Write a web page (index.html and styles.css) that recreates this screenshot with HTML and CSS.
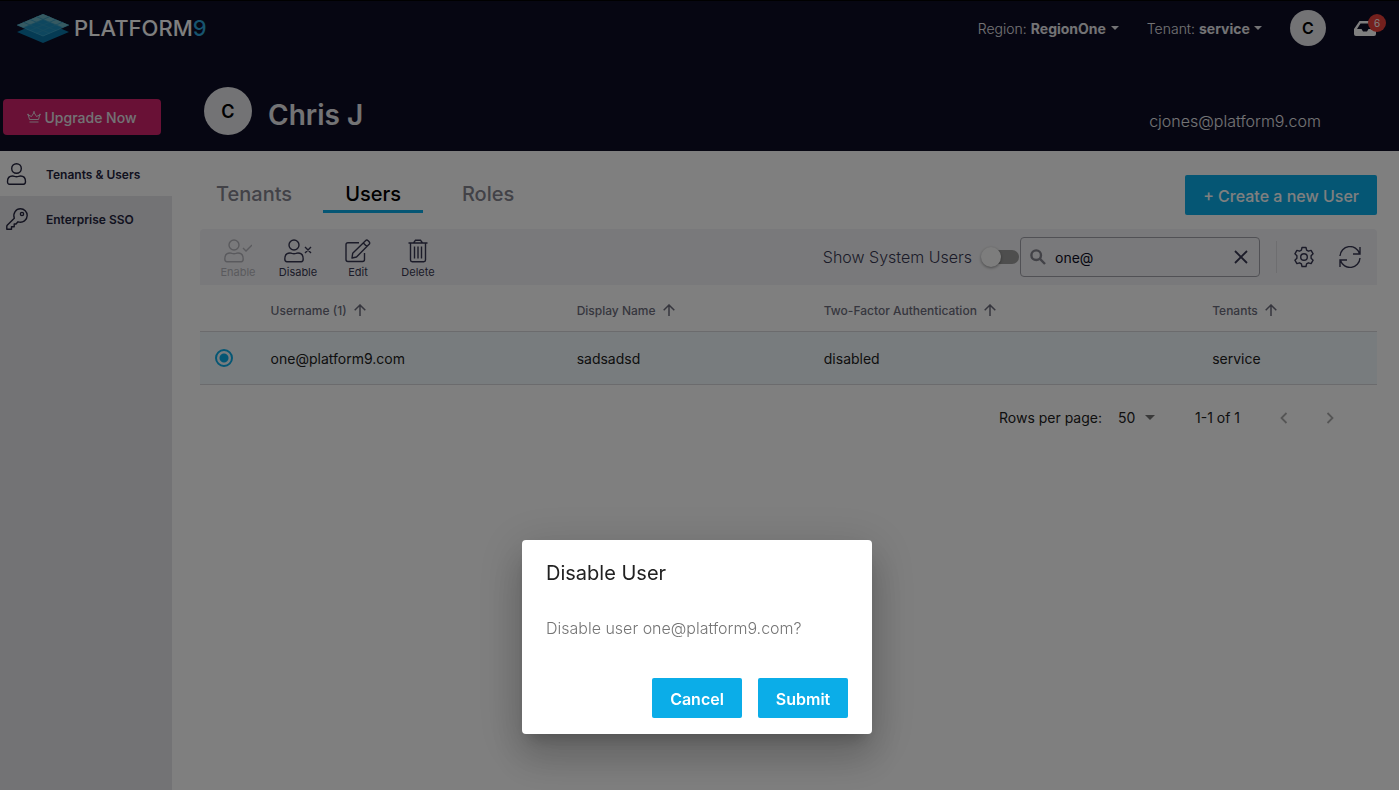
FILE: index.html
```html
<!DOCTYPE html>
<html lang="en">
<head>
    <meta charset="UTF-8">
    <meta name="viewport" content="width=device-width, initial-scale=1.0">
    <title>Platform9 - Tenants &amp; Users</title>
    <link rel="stylesheet" href="styles.css">
</head>
<body>
    <header class="header">
        <div class="topbar">
            <a class="logo" href="#">
                <svg width="52" height="29" viewBox="0 0 52 29">
                    <path d="M0 18 26 7 52 18 26 29z" fill="#0b76a8"/>
                    <path d="M0 11 26 0 52 11 26 22z" fill="#1c8fbf"/>
                    <path d="M26 0 52 11 45.500 13.700 26 5.500 6.500 13.700 0 11z" fill="#6db4c4"/>
                    <path d="M19.500 2.700 45.500 13.700M13 5.500 39 16.500M6.500 8.200 32.500 19.200M32.500 2.700 6.500 13.700M39 5.500 13 16.500M45.500 8.200 19.500 19.200" fill="none" stroke="#2f95bd" stroke-width=".8"/>
                    <path d="M0 11 26 22 52 11" fill="none" stroke="#4fb0d0" stroke-width=".6"/>
                </svg>
                <span class="logo-text">PLATFORM<span class="logo-nine">9</span></span>
            </a>
            <div class="topbar-right">
                <label class="context">Region:
                    <select class="context-select"><option>RegionOne</option></select>
                    <svg class="caret" width="8" height="4" viewBox="0 0 8 4"><path d="M0 0h8L4 4z" fill="currentColor"/></svg>
                </label>
                <label class="context">Tenant:
                    <select class="context-select"><option>service</option></select>
                    <svg class="caret" width="8" height="4" viewBox="0 0 8 4"><path d="M0 0h8L4 4z" fill="currentColor"/></svg>
                </label>
                <button class="avatar avatar-small" type="button">C</button>
                <button class="inbox" type="button" aria-label="Notifications">
                    <svg width="22" height="15" viewBox="0 0 22 15"><path d="M5.500 0h11L22 8v5q0 2-2 2H2q-2 0-2-2V8zM6.500 2.500 3 8h4.500L9 10.500h4L14.500 8H19l-3.500-5.500z" fill="#fff" fill-rule="evenodd"/></svg>
                    <span class="badge">6</span>
                </button>
            </div>
        </div>
        <div class="profile">
            <div class="upgrade-wrap">
                <button class="upgrade" type="button">
                    <svg width="14" height="12" viewBox="0 0 14 12" fill="none" stroke="currentColor" stroke-width=".9" stroke-linejoin="round"><path d="M2.500 8.500 1.300 4 4.500 5.500 7 1.500l2.500 4L12.700 4l-1.200 4.500zM2.500 11h9"/><circle cx="7" cy="1" r=".5"/><circle cx="1" cy="3.500" r=".5"/><circle cx="13" cy="3.500" r=".5"/></svg>
                    Upgrade Now
                </button>
            </div>
            <div class="avatar avatar-large">C</div>
            <h1 class="profile-name">Chris J</h1>
            <span class="profile-email">cjones@platform9.com</span>
        </div>
    </header>

    <div class="layout">
        <nav class="sidebar">
            <a class="nav-item active" href="#">
                <svg width="22" height="22" viewBox="0 0 22 22" fill="none" stroke="currentColor" stroke-width="1.400"><circle cx="10.500" cy="5.500" r="4.800"/><path d="M1.500 18.500C1.500 15 3.500 13 6.500 13q1 0 2 .4 2 .6 4 0 1-.4 2-.4c3 0 5 2 5 5.500 0 2-.8 2.700-2 2.700H3.500c-1.200 0-2-.7-2-2.700z"/></svg>
                <span class="nav-text">Tenants &amp; Users</span>
            </a>
            <a class="nav-item" href="#">
                <svg width="22" height="22" viewBox="0 0 22 22" fill="none" stroke="currentColor" stroke-width="1.400" stroke-linejoin="round"><path d="M8.300 10.200 1.200 17.300Q.8 17.700.8 18.300V21.200H5.500V18.700H8.200V16H10l2-2.200c5 1.600 9.200-2 9.200-6.300A6.700 6.700 0 0 0 14.500.800C10 .8 6.600 5 8.300 10.200z"/><circle cx="16" cy="6" r="1.600"/></svg>
                <span class="nav-text">Enterprise SSO</span>
            </a>
        </nav>

        <main class="content">
            <div class="tabs-row">
                <div class="tabs">
                    <a class="tab" href="#">Tenants</a>
                    <a class="tab selected" href="#">Users</a>
                    <a class="tab" href="#">Roles</a>
                </div>
                <button class="btn btn-create" type="button">+ Create a new User</button>
            </div>

            <div class="toolbar">
                <div class="actions">
                    <button class="action" type="button" disabled>
                        <svg width="28" height="24" viewBox="0 0 28 24" fill="none" stroke="currentColor" stroke-width="1.400"><circle cx="10" cy="6" r="5"/><path d="M.8 20C.8 16 3 14 6 14q1 0 2 .4 2 .6 4 0 1-.4 2-.4c3 0 5.200 2 5.200 6 0 2-.8 2.700-2 2.700H3c-1.400 0-2.200-.7-2.200-2.700zM19 9l3 3 6-6"/></svg>
                        Enable
                    </button>
                    <button class="action" type="button">
                        <svg width="28" height="24" viewBox="0 0 28 24" fill="none" stroke="currentColor" stroke-width="1.400"><circle cx="10" cy="6" r="5"/><path d="M.8 20C.8 16 3 14 6 14q1 0 2 .4 2 .6 4 0 1-.4 2-.4c3 0 5.200 2 5.200 6 0 2-.8 2.700-2 2.700H3c-1.400 0-2.200-.7-2.200-2.700zM21 8l6 6M27 8l-6 6"/></svg>
                        Disable
                    </button>
                    <button class="action" type="button">
                        <svg width="26" height="24" viewBox="0 0 26 24" fill="none" stroke="currentColor" stroke-width="1.400" stroke-linejoin="round"><path d="M14 3.800H3Q1 3.800 1 5.800V20.500Q1 22.500 3 22.500H17.500Q19.500 22.500 19.500 20.500V14M7 19l.7-4.700L20.500 1.700q1.300-1.200 2.600 0l1 1q1.200 1.300 0 2.600L11.500 18zM18.300 4l3.500 3.600"/></svg>
                        Edit
                    </button>
                    <button class="action" type="button">
                        <svg width="20" height="24" viewBox="0 0 20 24" fill="none" stroke="currentColor" stroke-width="1.400"><path d="M.5 4h19M2.500 4v17q0 1.700 1.700 1.700h11.600q1.700 0 1.700-1.700V4M5.500 4 7.500 1.200h5l2 2.800M6.500 7.500v12M10 7.500v12M13.500 7.500v12"/></svg>
                        Delete
                    </button>
                </div>
                <div class="filters">
                    <label class="system-label" for="systemUsers">Show System Users</label>
                    <input class="switch" type="checkbox" id="systemUsers">
                    <div class="search">
                        <svg width="16" height="16" viewBox="0 0 16 16" fill="none" stroke="currentColor" stroke-width="2.400"><circle cx="6.200" cy="6.200" r="4.800"/><path d="m9.700 9.700 5.300 5.300"/></svg>
                        <input class="search-input" type="text" aria-label="Search" value="one@">
                        <button class="icon-btn" type="button" aria-label="Clear search">
                            <svg width="14" height="14" viewBox="0 0 14 14" fill="none" stroke="currentColor" stroke-width="1.800"><path d="m1 1 12 12M13 1 1 13"/></svg>
                        </button>
                    </div>
                    <div class="table-tools">
                        <button class="icon-btn" type="button" aria-label="Settings">
                            <svg width="22" height="22" viewBox="0 0 22 22" fill="none" stroke="currentColor" stroke-width="1.400" stroke-linejoin="round"><path d="M9 1.500h4l.6 2.700 1.800 1 2.700-.8 2 3.400-2 1.900v2.600l2 1.900-2 3.400-2.700-.8-1.800 1-.6 2.700H9l-.6-2.700-1.800-1-2.700.8-2-3.400 2-1.900V9.700l-2-1.900 2-3.400 2.700.8 1.800-1z"/><circle cx="11" cy="11" r="3.300"/></svg>
                        </button>
                        <button class="icon-btn" type="button" aria-label="Refresh">
                            <svg width="22" height="22" viewBox="0 0 22 22" fill="none" stroke="currentColor" stroke-width="1.400"><path d="M1 10A10 10 0 0 1 20.500 7.500M21 1v7h-7M21 12A10 10 0 0 1 1.500 14.500M1 21v-7h7"/></svg>
                        </button>
                    </div>
                </div>
            </div>

            <table class="users">
                <colgroup>
                    <col class="col-select"><col class="col-username"><col class="col-display"><col class="col-auth"><col class="col-tenants">
                </colgroup>
                <thead>
                    <tr>
                        <th></th>
                        <th>Username (1) <svg class="sort" width="12" height="12" viewBox="0 0 12 12"><path d="M6 12V1M.7 6.300 6 1l5.300 5.300"/></svg></th>
                        <th>Display Name <svg class="sort" width="12" height="12" viewBox="0 0 12 12"><path d="M6 12V1M.7 6.300 6 1l5.300 5.300"/></svg></th>
                        <th>Two-Factor Authentication <svg class="sort" width="12" height="12" viewBox="0 0 12 12"><path d="M6 12V1M.7 6.300 6 1l5.300 5.300"/></svg></th>
                        <th>Tenants <svg class="sort" width="12" height="12" viewBox="0 0 12 12"><path d="M6 12V1M.7 6.300 6 1l5.300 5.300"/></svg></th>
                    </tr>
                </thead>
                <tbody>
                    <tr>
                        <td class="select-cell"><input class="radio" type="radio" name="user" aria-label="Select one@platform9.com" checked></td>
                        <td>one@platform9.com</td>
                        <td>sadsadsd</td>
                        <td>disabled</td>
                        <td>service</td>
                    </tr>
                </tbody>
            </table>

            <div class="pagination">
                <label for="rows">Rows per page:</label>
                <div class="rows">
                    <select class="rows-select" id="rows"><option>50</option></select>
                    <svg class="caret" width="10" height="5" viewBox="0 0 10 5"><path d="M0 0h10L5 5z" fill="#757575"/></svg>
                </div>
                <span class="range">1-1 of 1</span>
                <button class="icon-btn page-btn" type="button" aria-label="Previous page" disabled>
                    <svg width="8" height="12" viewBox="0 0 8 12"><path d="M6.500 1 1.500 6l5 5" fill="none" stroke="currentColor" stroke-width="1.800"/></svg>
                </button>
                <button class="icon-btn page-btn" type="button" aria-label="Next page" disabled>
                    <svg width="8" height="12" viewBox="0 0 8 12"><path d="m1.500 1 5 5-5 5" fill="none" stroke="currentColor" stroke-width="1.800"/></svg>
                </button>
            </div>
        </main>
    </div>

    <!-- Confirmation dialog -->
    <div class="backdrop">
        <div class="dialog" role="dialog" aria-labelledby="dialogTitle">
            <h2 class="dialog-title" id="dialogTitle">Disable User</h2>
            <p class="dialog-text">Disable user one@platform9.com?</p>
            <div class="dialog-actions">
                <button class="btn" type="button">Cancel</button>
                <button class="btn" type="button">Submit</button>
            </div>
        </div>
    </div>
</body>
</html>
```
FILE: styles.css
```css
* {
    box-sizing: border-box;
}
body {
    font-family: Inter, "Liberation Sans", sans-serif;
    font-size: 14px;
    background-color: #fff;
    color: #212121;
    margin: 0;
    min-height: 100vh;
    display: flex;
    flex-direction: column;
}
button, input, select {
    font-family: inherit;
    font-size: inherit;
    color: inherit;
}
button {
    border: none;
    background: none;
    padding: 0;
    cursor: pointer;
}
a {
    color: inherit;
    text-decoration: none;
}
svg {
    flex-shrink: 0;
}

/* header */
.header {
    background-color: #0c0c24;
    color: #e6e6ea;
    border-top: 1px solid #000;
}
.topbar {
    display: flex;
    justify-content: space-between;
    align-items: center;
    height: 54px;
    padding: 0 13px 0 17px;
}
.logo {
    display: flex;
    align-items: center;
    gap: 5px;
}
.logo-text {
    font-size: 22px;
    font-weight: 500;
    color: #fff;
}
.logo-nine {
    color: #2ea9dc;
}
.topbar-right {
    display: flex;
    align-items: center;
    gap: 28px;
}
.context {
    display: flex;
    align-items: center;
    gap: 4px;
    font-weight: 300;
}
.context-select {
    appearance: none;
    border: none;
    background: none;
    padding: 0;
    font-weight: 700;
}
.caret {
    pointer-events: none;
}
.avatar {
    display: flex;
    align-items: center;
    justify-content: center;
    border-radius: 50%;
    background-color: #e6e6ea;
    color: #000;
    font-weight: 600;
}
.avatar-small {
    width: 36px;
    height: 36px;
    font-size: 16px;
}
.avatar-large {
    width: 48px;
    height: 48px;
    font-size: 18px;
}
.inbox {
    position: relative;
    display: flex;
    width: 32px;
}
.badge {
    position: absolute;
    top: -7px;
    right: 0;
    width: 18px;
    border-radius: 50%;
    background-color: #e8403a;
    color: #fff;
    font-size: 10px;
    line-height: 18px;
}
.profile {
    display: flex;
    align-items: center;
    height: 96px;
    padding: 16px 78px 0 0;
}
.upgrade-wrap {
    width: 204px;
    padding: 12px 0 0 3px;
}
.upgrade {
    display: flex;
    align-items: center;
    justify-content: center;
    gap: 3px;
    width: 158px;
    height: 36px;
    border-radius: 4px;
    background-color: #d2226c;
    font-weight: 500;
}
.profile-name {
    flex: 1;
    margin: 0;
    padding: 8px 0 0 16px;
    font-size: 28px;
    font-weight: 600;
}
.profile-email {
    padding-top: 20px;
    font-size: 16px;
    font-weight: 300;
}

/* page layout */
.layout {
    flex: 1;
    display: grid;
    grid-template-columns: 172px 1fr;
}
.sidebar {
    background-color: #e6e6ea;
    color: #25253f;
}
.nav-item {
    display: flex;
    align-items: center;
    gap: 18px;
    height: 45px;
    padding-left: 6px;
    font-size: 12px;
    font-weight: 600;
}
.nav-item.active {
    background-color: #fff;
}
.nav-text {
    padding-top: 2px;
}
.content {
    padding: 24px 22px 24px 28px;
}
.tabs-row {
    display: flex;
    justify-content: space-between;
    align-items: flex-start;
}
.tabs {
    display: flex;
    gap: 15px;
}
.tab {
    min-width: 100px;
    height: 38px;
    padding: 0 16px;
    border-bottom: 3px solid transparent;
    color: #84848f;
    font-size: 20px;
    font-weight: 500;
    line-height: 38px;
    text-align: center;
}
.tab.selected {
    border-color: #0bade8;
    color: #000;
}
.btn {
    min-width: 90px;
    height: 40px;
    padding: 2px 16px 0;
    border-radius: 2px;
    background-color: #0bade8;
    color: #fff;
    font-size: 16px;
    font-weight: 600;
}
.btn-create {
    padding: 2px 18px 0;
    font-weight: 500;
}

/* toolbar */
.toolbar {
    display: flex;
    justify-content: space-between;
    height: 56px;
    margin-top: 14px;
    border-radius: 4px 4px 0 0;
    background-color: #f3f3f6;
    color: #373752;
}
.actions {
    display: flex;
    padding: 0 8px;
}
.action {
    display: flex;
    flex-direction: column;
    align-items: center;
    gap: 2px;
    min-width: 60px;
    padding-top: 10px;
    font-size: 11px;
    line-height: 14px;
}
.action:disabled {
    color: #b5b5bc;
}
.filters {
    display: flex;
    align-items: center;
}
.system-label {
    margin-right: 10px;
    font-size: 16px;
    font-weight: 300;
}
.switch {
    position: relative;
    appearance: none;
    width: 34px;
    height: 14px;
    margin: 0 1px 0 3px;
    border-radius: 7px;
    background-color: #9c9c9c;
}
.switch::before {
    content: "";
    position: absolute;
    top: -3px;
    left: -4px;
    width: 20px;
    height: 20px;
    border-radius: 50%;
    background-color: #fafafa;
    box-shadow: 0 1px 3px rgba(0, 0, 0, 0.4);
}
.search {
    display: flex;
    align-items: center;
    width: 240px;
    height: 40px;
    padding: 0 11px 0 9px;
    border: 1px solid #a2a2ab;
    border-radius: 4px;
}
.search > svg {
    color: #84848f;
}
.search-input {
    flex: 1;
    min-width: 0;
    padding: 0 9px;
    border: none;
    outline: none;
    background: none;
    color: #0c0c24;
}
.icon-btn {
    display: flex;
}
.table-tools {
    display: flex;
    align-items: center;
    gap: 24px;
    height: 32px;
    margin-left: 16px;
    padding: 0 16px;
    border-left: 1px solid #dcdce1;
}

/* users table */
.users {
    width: 100%;
    table-layout: fixed;
    border-collapse: collapse;
}
.col-select { width: 6%; }
.col-username { width: 26%; }
.col-display { width: 21%; }
.col-auth { width: 33%; }
.col-tenants { width: 14%; }
.users th {
    height: 46px;
    padding: 5px 0 0;
    border-bottom: 1px solid #d6d6da;
    color: #6d6d7c;
    font-size: 12px;
    font-weight: 500;
    text-align: left;
}
.sort {
    margin-left: 4px;
    vertical-align: -1px;
    fill: none;
    stroke: currentColor;
    stroke-width: 1.5;
}
.users td {
    height: 53px;
    padding: 2px 0 0;
    border-bottom: 1px solid #d6d6da;
    background-color: #f1f9fd;
}
.users .select-cell {
    padding: 0 0 0 15px;
}
.radio {
    display: block;
    appearance: none;
    width: 18px;
    height: 18px;
    margin: 0;
    border: 2px solid #0bade8;
    border-radius: 50%;
}
.radio:checked {
    background: radial-gradient(circle, #0bade8 4px, transparent 5px);
}
.pagination {
    display: flex;
    align-items: center;
    justify-content: flex-end;
    height: 66px;
    padding-right: 43px;
}
.rows {
    display: flex;
    align-items: center;
    gap: 9px;
    margin-left: 16px;
}
.rows-select {
    appearance: none;
    border: none;
    background: none;
    padding: 0;
}
.range {
    margin: 0 40px 0 40px;
}
.page-btn {
    color: #ababab;
}
.page-btn + .page-btn {
    margin-left: 38px;
}

/* dialog */
.backdrop {
    position: fixed;
    inset: 0;
    display: flex;
    align-items: flex-end;
    justify-content: center;
    padding: 0 5px 56px 0;
    background-color: rgba(0, 0, 0, 0.5);
}
.dialog {
    width: 350px;
    padding: 16px 24px;
    border-radius: 4px;
    background-color: #fff;
    box-shadow: 0 11px 15px -7px rgba(0, 0, 0, 0.2), 0 24px 38px 3px rgba(0, 0, 0, 0.14), 0 9px 46px 8px rgba(0, 0, 0, 0.12);
}
.dialog-title {
    margin: 0;
    font-size: 20px;
    font-weight: 400;
    line-height: 34px;
}
.dialog-text {
    margin: 26px 0 38px;
    color: #757575;
    font-size: 16px;
    font-weight: 300;
    line-height: 24px;
}
.dialog-actions {
    display: flex;
    justify-content: flex-end;
    gap: 16px;
}
```
